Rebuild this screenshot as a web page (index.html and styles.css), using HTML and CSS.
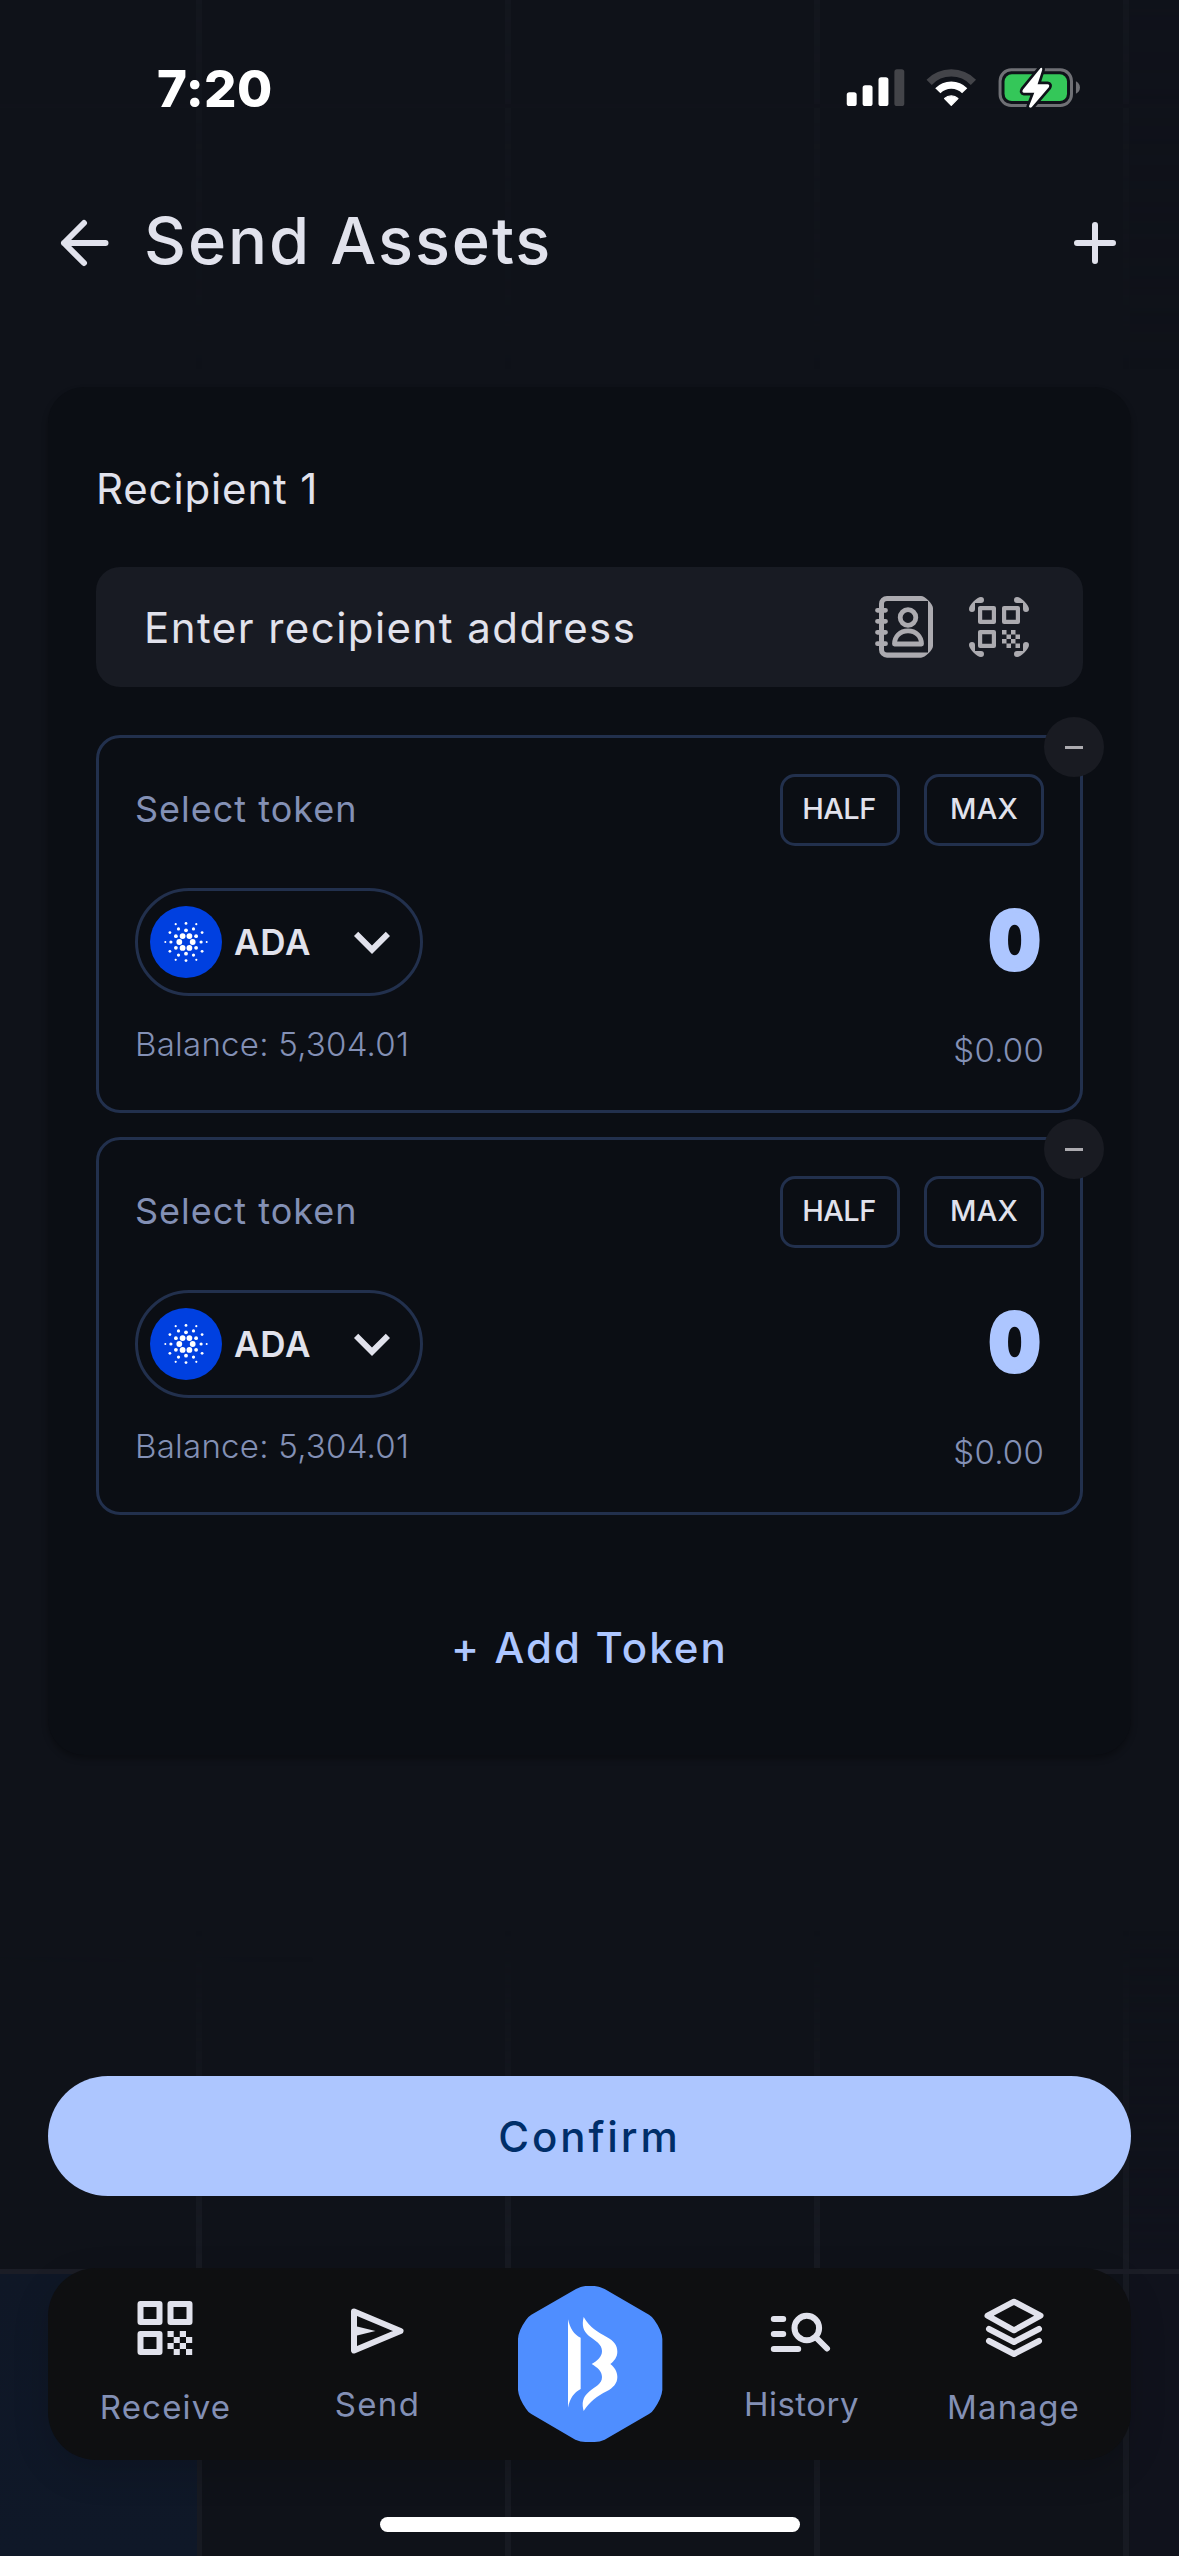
FILE: index.html
```html
<!DOCTYPE html>
<html lang="en">
<head>
<meta charset="utf-8">
<title>Send Assets</title>
<link rel="stylesheet" href="styles.css">
</head>
<body>
<svg class="sprite" aria-hidden="true">
  <symbol id="ada" viewBox="0 0 72 72">
    <circle cx="36" cy="36" r="36" fill="#0040e0"/>
    <g fill="#fff">
      <circle cx="42.7" cy="36" r="2.9"/><circle cx="29.3" cy="36" r="2.9"/><circle cx="39.4" cy="30.1" r="2.9"/><circle cx="32.6" cy="30.1" r="2.9"/><circle cx="39.4" cy="41.9" r="2.9"/><circle cx="32.6" cy="41.9" r="2.9"/>
      <circle cx="36" cy="24.3" r="1.9"/><circle cx="36" cy="47.7" r="1.9"/><circle cx="46.1" cy="30.2" r="1.9"/><circle cx="25.9" cy="30.2" r="1.9"/><circle cx="46.1" cy="41.8" r="1.9"/><circle cx="25.9" cy="41.8" r="1.9"/>
      <circle cx="51.1" cy="36" r="1.6"/><circle cx="20.9" cy="36" r="1.6"/><circle cx="43.5" cy="22.9" r="1.6"/><circle cx="28.5" cy="22.9" r="1.6"/><circle cx="43.5" cy="49.1" r="1.6"/><circle cx="28.5" cy="49.1" r="1.6"/>
      <circle cx="36" cy="17.4" r="1.4"/><circle cx="36" cy="54.6" r="1.4"/><circle cx="52.1" cy="26.6" r="1.4"/><circle cx="19.9" cy="26.6" r="1.4"/><circle cx="52.1" cy="45.3" r="1.4"/><circle cx="19.9" cy="45.3" r="1.4"/>
      <circle cx="56.7" cy="36" r="1"/><circle cx="15.3" cy="36" r="1"/><circle cx="46.3" cy="18.2" r="1.1"/><circle cx="25.7" cy="18.2" r="1.1"/><circle cx="46.3" cy="53.8" r="1.1"/><circle cx="25.7" cy="53.8" r="1.1"/>
    </g>
  </symbol>
  <symbol id="chevron" viewBox="0 0 24 24">
    <path fill="currentColor" d="M16.59 8.59 12 13.17 7.41 8.59 6 10l6 6 6-6z"/>
  </symbol>
</svg>

<div class="screen">
  <div class="backdrop"></div>

  <div class="status">
    <span class="clock">7:20</span>
    <svg class="status-icons" viewBox="75 80 715 130">
      <g fill="#fff">
        <rect x="78" y="156" width="30" height="42" rx="8"/>
        <rect x="126" y="135" width="30" height="63" rx="8"/>
        <rect x="174" y="111" width="30" height="87" rx="8"/>
      </g>
      <rect x="222" y="87" width="30" height="111" rx="8" fill="#434449"/>
      <path d="M327.1 126.4A93 93 0 0 1 460.9 126.4" fill="none" stroke="#434449" stroke-width="22"/>
      <path d="M353.4 151.8A56.5 56.5 0 0 1 434.6 151.8" fill="none" stroke="#fff" stroke-width="22"/>
      <path d="M394 196 374 175.500A29 29 0 0 1 414 175.500Z" fill="#fff" stroke="#fff" stroke-width="4" stroke-linejoin="round"/>
      <rect x="541.500" y="88.500" width="216" height="108" rx="34" fill="none" stroke="#6f7075" stroke-width="9"/>
      <path d="M771 123C779 127 783 134 783 142S779 157 771 161Z" fill="#6f7075"/>
      <rect x="555" y="102" width="189" height="81" rx="22" fill="#34c759"/>
      <path class="bolt" d="M664 83 611 148Q606 157 614 158H645L629 199Q630 206 637 202L689 141Q693 133 685 132H655L669 88Q670 80 664 83Z"/>
    </svg>
  </div>

  <header class="header">
    <svg class="icon stroke" viewBox="0 0 72 72"><path d="M57.500 36H16M36 16 16 36 36 56"/></svg>
    <h1 class="title">Send Assets</h1>
    <svg class="icon stroke" viewBox="0 0 72 72"><path d="M36 18V54M18 36H54"/></svg>
  </header>

  <main class="card">
    <h2 class="recipient">Recipient 1</h2>
    <div class="address">
      <span class="placeholder">Enter recipient address</span>
      <svg class="icon dim" viewBox="0 0 72 72">
        <path fill="currentColor" fill-rule="evenodd" d="M20 5H54C58 5 66 13 66 17V55C66 59 58 66.700 54 66.700H20A8 8 0 0 1 12 58.700V13A8 8 0 0 1 20 5ZM17 13V58.500A3 3 0 0 0 20 61.500H61V10H20A3 3 0 0 0 17 13Z"/>
        <g fill="none" stroke="currentColor" stroke-linecap="round" stroke-linejoin="round" stroke-width="4.800">
          <path d="M10.500 19.300H18.500M10.500 30.300H18.500M10.500 41.300H18.500M10.500 52.700H18.500"/>
          <circle cx="41" cy="26.500" r="7.800"/>
          <path d="M27.500 53C27.500 45.500 33 39.800 41 39.800S54.500 45.500 54.500 53Z"/>
        </g>
      </svg>
      <svg class="icon dim" viewBox="0 0 72 72">
        <g fill="currentColor">
          <path d="M6 18a3 3 0 0 0 6 0V12H18a3 3 0 0 0 0-6C14 6 6 14 6 18Z"/>
          <path d="M66 18a3 3 0 0 1-6 0V12H54a3 3 0 0 1 0-6C58 6 66 14 66 18Z"/>
          <path d="M6 54a3 3 0 0 1 6 0V60H18a3 3 0 0 1 0 6C14 66 6 58 6 54Z"/>
          <path d="M66 54a3 3 0 0 0-6 0V60H54a3 3 0 0 0 0 6C58 66 66 58 66 54Z"/>
          <path d="M39 39h4.500v4.500H39zM48 39h4.500v4.500H48zM43.500 43.500H48V48h-4.500zM52.500 43.500H57V48h-4.500zM39 48h4.500v4.500H39zM48 48h4.500v4.500H48zM43.500 52.500H48V57h-4.500zM52.500 52.500H57V57h-4.500z"/>
        </g>
        <g fill="none" stroke="currentColor" stroke-width="4.200" stroke-linejoin="round">
          <path d="M17.100 17.100H30.900V30.900H17.100zM41.100 17.100H54.900V30.900H41.100zM17.100 41.100H30.900V54.900H17.100z"/>
        </g>
      </svg>
    </div>

    <div class="tokens">
      <section class="token">
        <button class="remove" aria-label="Remove token"><span class="dash"></span></button>
        <div class="row">
          <span class="label">Select token</span>
          <div class="quick"><button class="chip half">HALF</button><button class="chip">MAX</button></div>
        </div>
        <div class="row picker-row">
          <button class="picker">
            <svg class="icon"><use href="#ada"/></svg>
            <span class="symbol">ADA</span>
            <svg class="icon"><use href="#chevron"/></svg>
          </button>
          <span class="amount">0</span>
        </div>
        <div class="row foot">
          <span class="balance">Balance: 5,304.01</span>
          <span class="fiat">$0.00</span>
        </div>
      </section>
      <section class="token">
        <button class="remove" aria-label="Remove token"><span class="dash"></span></button>
        <div class="row">
          <span class="label">Select token</span>
          <div class="quick"><button class="chip half">HALF</button><button class="chip">MAX</button></div>
        </div>
        <div class="row picker-row">
          <button class="picker">
            <svg class="icon"><use href="#ada"/></svg>
            <span class="symbol">ADA</span>
            <svg class="icon"><use href="#chevron"/></svg>
          </button>
          <span class="amount">0</span>
        </div>
        <div class="row foot">
          <span class="balance">Balance: 5,304.01</span>
          <span class="fiat">$0.00</span>
        </div>
      </section>
    </div>

    <button class="add">+ Add Token</button>
  </main>

  <button class="confirm">Confirm</button>

  <nav class="nav">
    <a class="tab receive">
      <svg class="icon" viewBox="0 0 72 72">
        <path fill="none" stroke="currentColor" stroke-width="6" stroke-linejoin="round" d="M10.500 12H29.500V30H10.500zM40.500 12H59.500V30H40.500zM10.500 42H29.500V60H10.500z"/>
        <path fill="currentColor" d="M37.500 39h6.200v6h-6.200zM49.800 39H56v6h-6.200zM43.700 45h6.100v6h-6.100zM56 45h6.200v6H56zM37.500 51h6.200v6h-6.200zM49.800 51H56v6h-6.200zM43.700 57h6.100v6h-6.100zM56 57h6.200v6H56z"/>
      </svg>
      <span class="tab-label">Receive</span>
    </a>
    <a class="tab raised send">
      <svg class="icon stroke" viewBox="0 0 72 72">
        <path d="M12 19.500 58.500 39 12 58.500Z"/>
        <path class="solid" d="M13 34 33.500 39 13 44Z"/>
      </svg>
      <span class="tab-label">Send</span>
    </a>
    <a class="home">
      <svg class="logo" viewBox="106 72 444 480">
        <path fill="#4f8eff" d="M286 87Q300 79 314 78H342Q357 79 372 87L505 164Q515 170 521 180Q544 212 545 237V390Q543 415 521 446Q515 456 505 462L372 539Q357 546 342 546H314Q300 546 284 539L152 462Q142 456 136 446Q114 415 112 390V237Q113 212 136 180Q142 170 152 164Z"/>
        <g fill="#fff">
          <path d="M262 178C268 205 280 225 300 233V387C280 397 268 415 262 443Z"/>
          <path d="M309 171C330 205 350 215 378 231C400 243 410 256 410 275C410 292 400 303 389 312C402 322 410 335 410 351C410 370 398 383 378 394C350 408 328 425 309 453C303 430 305 412 325 395C345 379 364 372 364 351C364 334 350 322 333 312C350 302 364 291 364 273C364 253 345 243 325 228C307 213 303 195 309 171Z"/>
        </g>
      </svg>
    </a>
    <a class="tab raised history">
      <svg class="icon stroke" viewBox="0 0 72 72">
        <path d="M7.800 27H17.200M7.800 42H17.200M7.800 57H32.200M50.500 46 61 56.500"/>
        <circle cx="40.800" cy="36" r="12.300"/>
      </svg>
      <span class="tab-label">History</span>
    </a>
    <a class="tab manage">
      <svg class="icon stroke" viewBox="0 0 72 72">
        <path d="M36 9.700 62.500 23.700 36 38.300 9.500 23.700ZM11 37 36 50 61 37M11 49 36 62 61 49"/>
      </svg>
      <span class="tab-label">Manage</span>
    </a>
  </nav>

  <div class="indicator"></div>
</div>
</body>
</html>
```
FILE: styles.css
```css
:root {
  --bg: #0f1219;
  --card: #0b0e14;
  --field: #181b23;
  --line: #22304d;
  --text: #e1e2ec;
  --muted: #8390b5;
  --primary: #adc6ff;
}

* {
  box-sizing: border-box;
}

body {
  margin: 0;
  background: var(--bg);
  color: var(--text);
  font-family: Inter, "Open Sans", sans-serif;
}

button {
  margin: 0;
  padding: 0;
  border: 0;
  background: none;
  color: inherit;
  font: inherit;
}

h1,
h2 {
  margin: 0;
}

.sprite {
  position: absolute;
  width: 0;
  height: 0;
}

.screen {
  position: relative;
  display: flex;
  flex-direction: column;
  width: 1179px;
  height: 2556px;
  padding: 0 48px;
  overflow: hidden;
  white-space: nowrap;
}

.screen > * {
  position: relative;
  flex: none;
}

/* Faint grid behind the content, fading out towards the middle. */
.screen > .backdrop {
  position: absolute;
  inset: 0;
  background:
    linear-gradient(#0f1726, #0f1828) 0 2274px / 197px 282px no-repeat,
    linear-gradient(#1b1d26, #1b1d26) 0 2269px / 100% 5px no-repeat,
    linear-gradient(90deg, #12151d, transparent 320px) 0 1957px / 100% 5px no-repeat,
    linear-gradient(#12151d, #12151d) 0 104px / 100% 4px no-repeat,
    repeating-linear-gradient(90deg, transparent 0 196px, #171a22 196px 202px, transparent 202px 309px),
    linear-gradient(90deg, transparent 1130px, #10121c 1130px);
  -webkit-mask-image: linear-gradient(rgba(0, 0, 0, .55), transparent 370px, transparent 1930px, #000 2260px);
  mask-image: linear-gradient(rgba(0, 0, 0, .55), transparent 370px, transparent 1930px, #000 2260px);
}

.icon {
  display: block;
  flex: none;
  width: 72px;
  height: 72px;
}

.stroke {
  fill: none;
  stroke: currentColor;
  stroke-width: 6;
  stroke-linecap: round;
  stroke-linejoin: round;
}

.solid {
  fill: currentColor;
  stroke: none;
}

.dim {
  color: #acabb0;
}

.status {
  display: flex;
  align-items: center;
  justify-content: space-between;
  height: 176px;
  padding: 0 48px 0 109px;
}

.clock {
  color: #fff;
  font-size: 51px;
  font-weight: 800;
  letter-spacing: .4px;
}

.status-icons {
  width: 238px;
  height: 43px;
}

.bolt {
  fill: #fff;
  stroke: var(--bg);
  stroke-width: 16;
  stroke-linejoin: round;
  paint-order: stroke;
}

.header {
  display: flex;
  align-items: center;
  gap: 24px;
  height: 134px;
}

.title {
  flex: 1;
  padding-bottom: 5px;
  font-size: 65px;
  font-weight: 500;
  letter-spacing: 1.9px;
}

.card {
  display: flex;
  flex-direction: column;
  height: 1368px;
  margin-top: 77px;
  padding: 48px;
  border-radius: 36px;
  background: var(--card);
  box-shadow: 0 4px 6px rgba(0, 0, 0, .3);
}

.recipient {
  font-size: 42px;
  font-weight: 400;
  line-height: 108px;
  letter-spacing: .85px;
}

.address {
  display: flex;
  align-items: center;
  gap: 24px;
  height: 120px;
  margin-top: 24px;
  padding: 0 48px;
  border-radius: 24px;
  background: var(--field);
}

.placeholder {
  flex: 1;
  font-size: 42px;
  letter-spacing: 1.45px;
}

.tokens {
  display: flex;
  flex-direction: column;
  gap: 24px;
  margin-top: 48px;
}

.token {
  position: relative;
  height: 378px;
  padding: 36px;
  border: 3px solid var(--line);
  border-radius: 24px;
}

.remove {
  position: absolute;
  top: -21px;
  right: -24px;
  display: flex;
  align-items: center;
  justify-content: center;
  width: 60px;
  height: 60px;
  border-radius: 50%;
  background: #191b22;
}

.dash {
  width: 18px;
  height: 3px;
  background: #acabb0;
}

.row {
  display: flex;
  align-items: center;
  justify-content: space-between;
}

.label {
  padding-bottom: 2px;
  color: var(--muted);
  font-size: 36px;
  letter-spacing: 1px;
}

.quick {
  display: flex;
  gap: 24px;
}

.chip {
  width: 120px;
  height: 72px;
  padding-bottom: 3px;
  border: 3px solid var(--line);
  border-radius: 15px;
  font-size: 29px;
  font-weight: 500;
  letter-spacing: .24px;
}

.half {
  padding-right: 2px;
  letter-spacing: -.5px;
}

.picker-row {
  margin-top: 42px;
}

.picker {
  display: flex;
  align-items: center;
  justify-content: space-between;
  width: 288px;
  height: 108px;
  padding: 0 12px;
  border: 3px solid var(--line);
  border-radius: 54px;
}

.symbol {
  flex: 1;
  padding: 0 0 1px 12px;
  text-align: left;
  font-size: 35px;
  font-weight: 600;
  letter-spacing: .8px;
}

.amount {
  padding: 0 4px 5px 0;
  color: var(--primary);
  font-size: 80px;
  font-weight: 900;
  line-height: 1;
  -webkit-text-stroke: 4px var(--primary);
  transform: scaleX(.9);
  transform-origin: right;
}

.foot {
  height: 60px;
  margin-top: 18px;
  color: var(--muted);
  font-weight: 300;
}

.balance {
  font-size: 33px;
  letter-spacing: .25px;
}

.fiat {
  padding-top: 12px;
  font-size: 33px;
  letter-spacing: .2px;
}

.add {
  height: 120px;
  margin-top: 72px;
  color: var(--primary);
  font-size: 42px;
  font-weight: 500;
  letter-spacing: 2.1px;
}

.confirm {
  height: 120px;
  margin-top: 321px;
  border-radius: 60px;
  background: var(--primary);
  color: #002e69;
  font-size: 42px;
  font-weight: 500;
  letter-spacing: 2.9px;
}

.nav {
  display: grid;
  grid-template-columns: repeat(5, 212px);
  justify-content: center;
  height: 192px;
  margin-top: 72px;
  border-radius: 48px;
  background: #0e0f11;
  box-shadow: 0 12px 36px rgba(0, 0, 0, .15);
}

.tab {
  display: flex;
  flex-direction: column;
  align-items: center;
  gap: 19px;
  padding-top: 24px;
}

.raised {
  gap: 16px;
}

.tab-label {
  color: var(--muted);
  font-size: 33px;
  line-height: 48px;
  letter-spacing: 1.2px;
}

.send .tab-label {
  letter-spacing: 1.4px;
}

.history .tab-label {
  letter-spacing: .5px;
}

.home {
  display: flex;
  align-items: center;
  justify-content: center;
}

.logo {
  width: 148px;
  height: 160px;
}

.indicator {
  width: 420px;
  height: 15px;
  margin: 57px auto 0;
  border-radius: 8px;
  background: #fff;
}
```
